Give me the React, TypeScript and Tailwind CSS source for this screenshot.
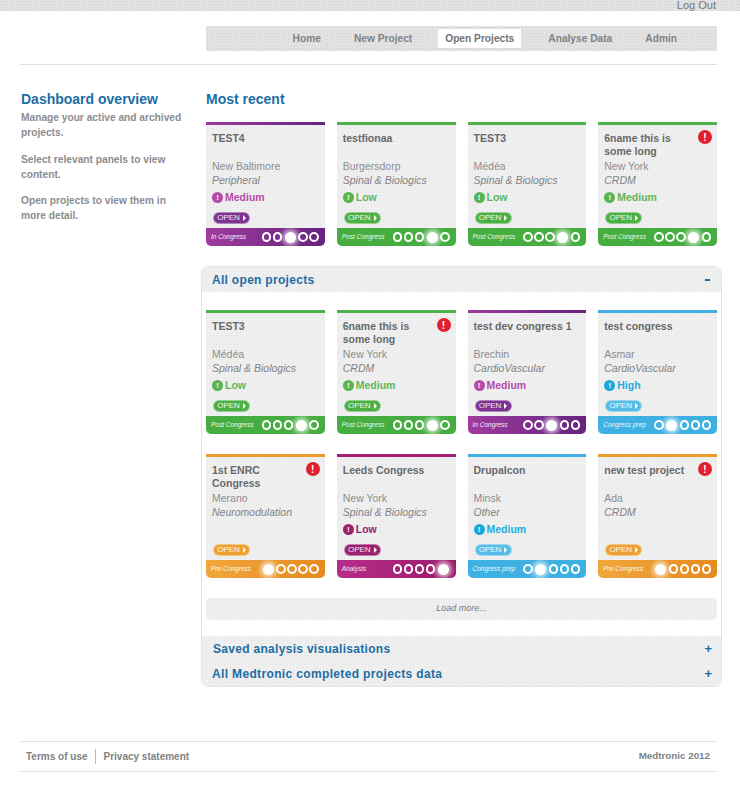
import React from "react";

type Tone = "purple" | "green" | "blue" | "orange" | "magenta";

const tones: Record<Tone, { bar: string; foot: string; open: string; dot: string; text: string }> = {
  purple: { bar: "bg-gradient-to-r from-[#9c3a9c] to-[#66237f]", foot: "bg-gradient-to-r from-[#a03c9e] to-[#66237f]", open: "bg-[#7d3291]", dot: "bg-[#b44ba8]", text: "text-[#b44ba8]" },
  green: { bar: "bg-[#4fb14a]", foot: "bg-[#46ad40]", open: "bg-[#4bb044]", dot: "bg-[#56b452]", text: "text-[#5cb85c]" },
  blue: { bar: "bg-[#42aee0]", foot: "bg-[#3fb0e2]", open: "bg-[#55bde6]", dot: "bg-[#18a8dc]", text: "text-[#22acdc]" },
  orange: { bar: "bg-[#eb9a2d]", foot: "bg-gradient-to-r from-[#f0a63a] to-[#e68a1e]", open: "bg-[#eda032]", dot: "bg-[#eb9a2d]", text: "text-[#eb9a2d]" },
  magenta: { bar: "bg-[#a81f78]", foot: "bg-gradient-to-r from-[#b62c8a] to-[#9b1b6b]", open: "bg-[#9a2070]", dot: "bg-[#9a2070]", text: "text-[#9a2070]" },
};

type P = {
  title: React.ReactNode;
  place: string;
  area: string;
  level?: string;
  levelTone?: Tone;
  tone: Tone;
  stage: string;
  active: number;
  alert?: boolean;
};

function Alert({ className }: { className: string }) {
  return (
    <span className={`flex items-center justify-center rounded-full font-bold text-white ${className}`}>!</span>
  );
}

const cardTexture =
  "bg-[#efefef] bg-[radial-gradient(#e6e6e6_1px,transparent_1px)] bg-[length:3px_3px]";

function Card({ p }: { p: P }) {
  const t = tones[p.tone];
  const lt = tones[p.levelTone ?? p.tone];
  return (
    <div className={`relative flex h-[124px] flex-col overflow-hidden rounded-b-[5px] ${cardTexture}`}>
      <div className={`h-[3px] shrink-0 ${t.bar}`} />
      <div className="flex grow flex-col px-[6px] pt-[7px]">
        <div className="h-[26px] whitespace-nowrap text-[10.5px] leading-[13px] font-bold text-[#67696b]">{p.title}</div>
        <div className="mt-[1px] text-[10.5px] leading-[14px] text-[#8b8d90]">{p.place}</div>
        <div className="text-[10.5px] leading-[14px] text-[#808285] italic">{p.area}</div>
        <div className="mt-[2px] flex h-[17px] items-center gap-[2px]">
          {p.level && (
            <>
              <Alert className={`h-[11px] w-[11px] text-[8px] ${lt.dot}`} />
              <span className={`text-[10.5px] font-bold ${lt.text}`}>{p.level}</span>
            </>
          )}
        </div>
        <div className={`mt-auto mb-[4px] ml-[1px] flex h-[12px] w-[37px] items-center justify-center gap-[3px] rounded-full border border-white/40 ${t.open}`}>
          <span className="text-[8px] leading-none text-white/90">OPEN</span>
          <span className="h-0 w-0 border-y-[3px] border-l-[3px] border-y-transparent border-l-white" />
        </div>
      </div>
      <div className={`flex h-[18px] shrink-0 items-center justify-between pr-[6px] pl-[5px] ${t.foot}`}>
        <span className="text-[6.5px] text-white/90 italic">{p.stage}</span>
        <div className="flex items-center gap-[1.5px]">
          {[0, 1, 2, 3, 4].map((i) =>
            i === p.active ? (
              <span key={i} className="mx-[1px] h-[11px] w-[11px] rounded-full bg-white shadow-[0_0_4px_3px_rgba(255,255,255,0.6)]" />
            ) : (
              <span key={i} className="h-[9.5px] w-[9.5px] rounded-full border-2 border-white" />
            ),
          )}
        </div>
      </div>
      {p.alert && <Alert className="absolute top-[8px] right-[5px] h-[14px] w-[14px] bg-[#e0202c] text-[10px]" />}
    </div>
  );
}

const sixName = (
  <>
    6name this is
    <br />
    some long
  </>
);

const recent: P[] = [
  { title: "TEST4", place: "New Baltimore", area: "Peripheral", level: "Medium", tone: "purple", stage: "In Congress", active: 2 },
  { title: "testfionaa", place: "Burgersdorp", area: "Spinal & Biologics", level: "Low", tone: "green", stage: "Post Congress", active: 3 },
  { title: "TEST3", place: "Médéa", area: "Spinal & Biologics", level: "Low", tone: "green", stage: "Post Congress", active: 3 },
  { title: sixName, place: "New York", area: "CRDM", level: "Medium", tone: "green", stage: "Post Congress", active: 3, alert: true },
];

const open: P[] = [
  { title: "TEST3", place: "Médéa", area: "Spinal & Biologics", level: "Low", tone: "green", stage: "Post Congress", active: 3 },
  { title: sixName, place: "New York", area: "CRDM", level: "Medium", tone: "green", stage: "Post Congress", active: 3, alert: true },
  { title: "test dev congress 1", place: "Brechin", area: "CardioVascular", level: "Medium", tone: "purple", stage: "In Congress", active: 2 },
  { title: "test congress", place: "Asmar", area: "CardioVascular", level: "High", tone: "blue", stage: "Congress prep", active: 1 },
  {
    title: (
      <>
        1st ENRC
        <br />
        Congress
      </>
    ),
    place: "Merano",
    area: "Neuromodulation",
    tone: "orange",
    stage: "Pre-Congress",
    active: 0,
    alert: true,
  },
  { title: "Leeds Congress", place: "New York", area: "Spinal & Biologics", level: "Low", tone: "magenta", stage: "Analysis", active: 4 },
  { title: "Drupalcon", place: "Minsk", area: "Other", level: "Medium", tone: "blue", stage: "Congress prep", active: 1 },
  { title: "new test project", place: "Ada", area: "CRDM", tone: "orange", stage: "Pre-Congress", active: 0, alert: true },
];

const texture =
  "bg-[#e2e2e2] bg-[radial-gradient(#d2d2d2_1px,transparent_1px)] bg-[length:3px_3px]";

export default function App() {
  return (
    <div className="h-[787px] w-[740px] overflow-hidden bg-white font-['Liberation_Sans',Arial,sans-serif]">
      <div className={`flex h-[11px] justify-end pr-[24px] ${texture}`}>
        <span className="text-[11px] leading-[11px] text-[#777777]">Log Out</span>
      </div>

      <div className={`ml-[206px] mr-[23px] mt-[15px] flex h-[25px] items-center justify-end gap-[33px] pr-[40px] text-[10.2px] font-bold text-[#808285] ${texture}`}>
        <span>Home</span>
        <span className="mr-[-7px]">New Project</span>
        <span className="mr-[-6px] flex h-[19px] items-center bg-white px-[7px] text-[#707274]">Open Projects</span>
        <span>Analyse Data</span>
        <span>Admin</span>
      </div>

      <div className="mx-[20px] mt-[13px] h-[1px] w-[697px] bg-[#dddddd]" />

      <div className="flex">
        <aside className="ml-[21px] w-[165px] shrink-0 pt-[26px] text-[10.2px] leading-[15px] font-bold text-[#8b8d90]">
          <h2 className="mb-[3px] whitespace-nowrap text-[14px] leading-[16px] font-bold text-[#1c6ea4]">Dashboard overview</h2>
          <p className="mb-[11.5px]">
            <span className="whitespace-nowrap">Manage your active and archived</span> projects.
          </p>
          <p className="mb-[11.5px]">Select relevant panels to view content.</p>
          <p>Open projects to view them in more detail.</p>
        </aside>

        <main className="ml-[15px] w-[521px] shrink-0">
          <h2 className="ml-[5px] mt-[26px] text-[14px] leading-[16px] font-bold text-[#1c6ea4]">Most recent</h2>
          <div className="mx-[5px] mt-[15px] grid w-[511px] grid-cols-4 gap-x-[12px]">
            {recent.map((p, i) => (
              <Card key={i} p={p} />
            ))}
          </div>

          <section className="mt-[20px] w-[521px] rounded-[7px] border border-[#e3e3e3]">
            <div className={`flex h-[25px] items-center justify-between rounded-t-[7px] pr-[11px] pl-[10px] ${cardTexture}`}>
              <span className="text-[12px] font-bold tracking-[0.3px] text-[#1c6ea4]">All open projects</span>
              <span className="h-[2px] w-[5px] bg-[#1c6ea4]" />
            </div>
            <div className="mx-[4px] mt-[18px] grid w-[511px] grid-cols-4 gap-x-[12px] gap-y-[20px]">
              {open.map((p, i) => (
                <Card key={i} p={p} />
              ))}
            </div>
            <div className={`mx-[4px] mt-[20px] flex h-[22px] w-[511px] items-center justify-center rounded-[5px] text-[9px] text-[#777777] italic ${cardTexture}`}>
              Load more...
            </div>
            <div className={`mt-[16px] rounded-b-[7px] pr-[9px] pl-[11px] ${cardTexture}`}>
              <div className="flex h-[25px] items-center justify-between">
                <span className="text-[12px] font-bold tracking-[0.3px] text-[#1c6ea4]">Saved analysis visualisations</span>
                <span className="text-[13px] font-bold text-[#1c6ea4]">+</span>
              </div>
              <div className="flex h-[25px] items-center justify-between">
                <span className="-ml-[1px] text-[12px] font-bold tracking-[0.35px] text-[#1c6ea4]">All Medtronic completed projects data</span>
                <span className="text-[13px] font-bold text-[#1c6ea4]">+</span>
              </div>
            </div>
          </section>
        </main>
      </div>

      <div className="mx-[20px] mt-[54px] flex h-[31px] w-[697px] items-center justify-between border-y border-[#e2e2e2] pr-[7px] pl-[6px] text-[10px] font-bold text-[#808285]">
        <div className="flex items-center">
          <span className="border-r border-[#bbbbbb] pr-[7px]">Terms of use</span>
          <span className="pl-[8px]">Privacy statement</span>
        </div>
        <span className="text-[9.8px]">Medtronic 2012</span>
      </div>
    </div>
  );
}
